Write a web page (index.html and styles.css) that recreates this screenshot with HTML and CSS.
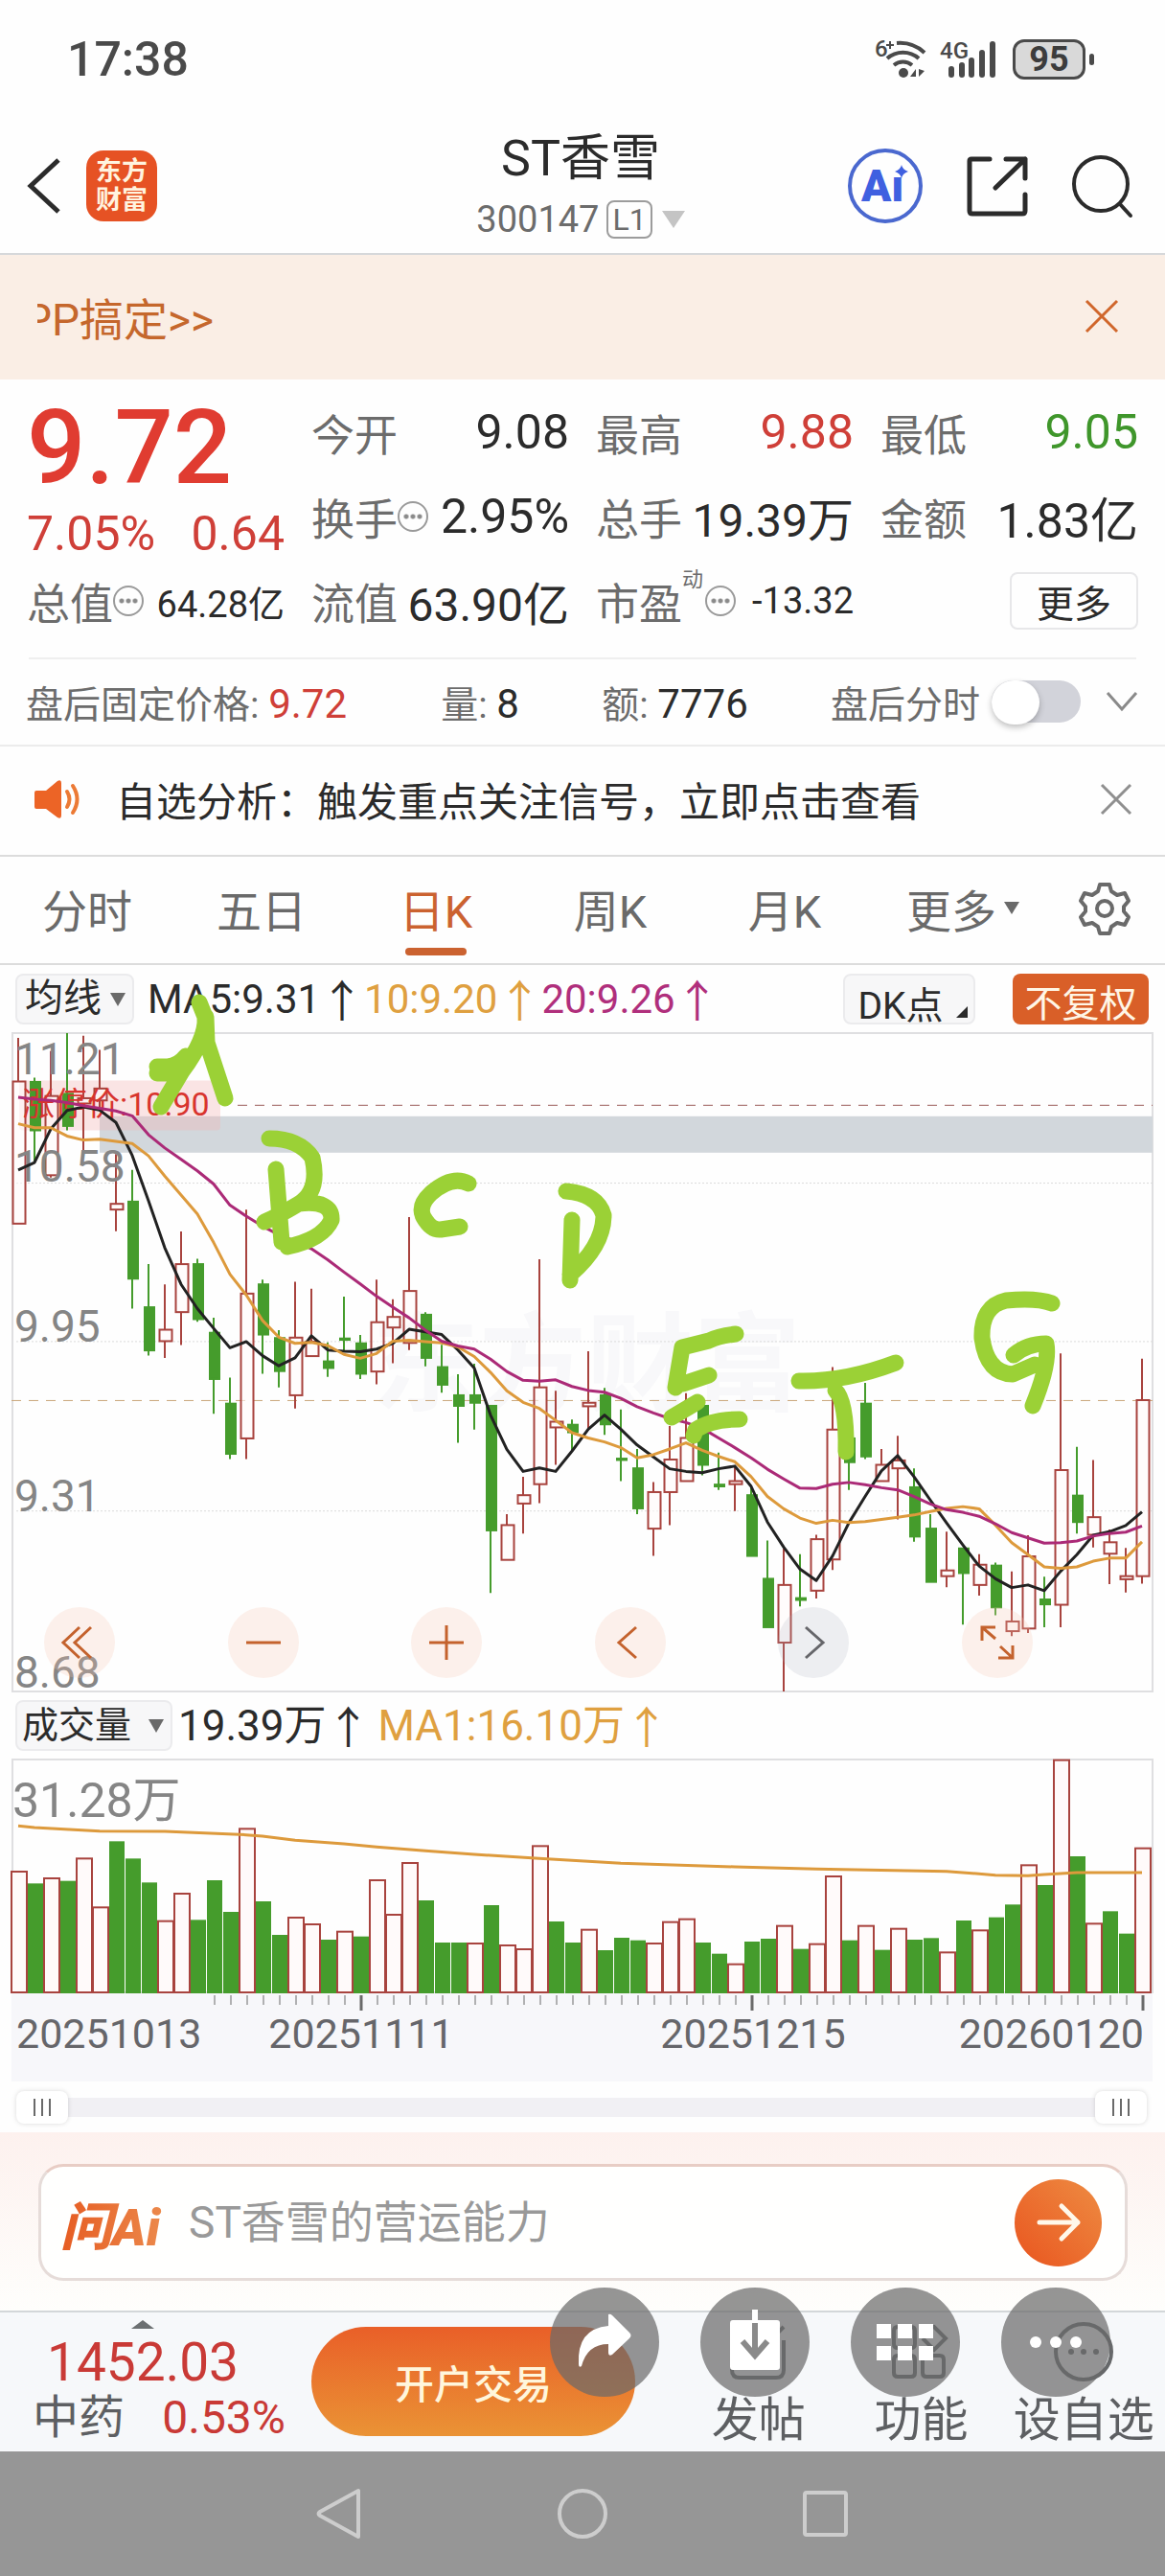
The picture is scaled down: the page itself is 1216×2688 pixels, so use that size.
FILE: index.html
```html
<!DOCTYPE html>
<html lang="zh-CN">
<head>
  <meta charset="UTF-8" />
  <meta name="viewport" content="width=device-width, initial-scale=1.0" />
  <title>ST香雪 300147</title>
  <link rel="stylesheet" href="styles.css">
</head>

<body>

  <div class="status-bar">
    <span class="clock">17:38</span>
    <div class="status-icons">
      <svg class="icon-wifi" width="56" height="42" viewBox="0 0 56 42" fill="none" stroke="#4a4a4a" stroke-width="4">
        <path d="M23 4a38 38 0 0 1 29 10M13 20a25 25 0 0 1 33 0M20 27a15 15 0 0 1 19 0" />
        <circle cx="30" cy="35" r="5" fill="#4a4a4a" stroke="none" />
        <path d="M43 31v8h-6zM46 31v8l6-6z" fill="#4a4a4a" stroke="none" />
        <text class="tiny" x="0" y="18">6</text>
        <path d="M12 6h8M16 2v8" stroke-width="2" />
      </svg>
      <svg class="icon-signal" width="60" height="42" viewBox="0 0 60 42">
        <text class="tiny" x="0" y="20">4G</text>
        <path d="M12 31v6M23 27v10M33 22v15M44 14v23M55 5v32" stroke="#4a4a4a" stroke-width="6" stroke-linecap="round" />
      </svg>
      <span class="battery">95</span>
    </div>
  </div>

  <header class="header">
    <div class="header-left">
      <button class="icon-btn" aria-label="返回">
        <svg width="36" height="60" viewBox="0 0 36 60" fill="none" stroke="#2b2b2b" stroke-width="5"><path d="M33 3 4 30l29 27" /></svg>
      </button>
      <a href="#" class="logo"><span>东方</span><span>财富</span></a>
    </div>
    <div class="header-title">
      <h1>ST香雪</h1>
      <p class="code">300147<span class="level">L1</span><i class="caret"></i></p>
    </div>
    <div class="header-right">
      <button class="icon-btn" aria-label="Ai">
        <svg width="80" height="80" viewBox="0 0 80 80">
          <circle cx="40" cy="40" r="37" fill="none" stroke="#4a68cf" stroke-width="4" />
          <text class="ai-text" x="15" y="56">Aı</text>
          <path d="M57 18q1 5 7 7-6 2-7 7-1-5-7-7 6-2 7-7z" fill="#3f60e0" />
        </svg>
      </button>
      <button class="icon-btn" aria-label="分享">
        <svg width="64" height="64" viewBox="0 0 64 64" fill="none" stroke="#2b2b2b" stroke-width="5" stroke-linecap="round" stroke-linejoin="round">
          <path d="M24 4H5q-2 0-2 2v52q0 3 3 3h52q3 0 3-3V41M41 4h20v20M61 4 30 34" />
        </svg>
      </button>
      <button class="icon-btn" aria-label="搜索">
        <svg width="66" height="66" viewBox="0 0 66 66" fill="none" stroke="#2b2b2b" stroke-width="4" stroke-linecap="round">
          <circle cx="31" cy="31" r="28" /><path d="m51 52 11 12" />
        </svg>
      </button>
    </div>
  </header>

  <div class="banner">
    <div class="banner-text"><span>PP搞定&gt;&gt;</span></div>
    <button class="icon-btn" aria-label="关闭">
      <svg width="36" height="36" viewBox="0 0 36 36" stroke="#d0662b" stroke-width="3"><path d="m2 2 32 32M34 2 2 34" /></svg>
    </button>
  </div>

  <section class="quote">
    <div class="quote-main">
      <p class="price">9.72</p>
      <p class="change"><span>7.05%</span><span>0.64</span></p>
    </div>
    <div class="cell"><label>今开</label><b>9.08</b></div>
    <div class="cell"><label>最高</label><b class="up">9.88</b></div>
    <div class="cell"><label>最低</label><b class="down">9.05</b></div>
    <div class="cell"><label>换手</label><i class="info"></i><b>2.95%</b></div>
    <div class="cell"><label>总手</label><b class="long">19.39万</b></div>
    <div class="cell"><label>金额</label><b>1.83亿</b></div>
    <div class="cell"><label>总值</label><i class="info"></i><b class="small">64.28亿</b></div>
    <div class="cell"><label>流值</label><b class="long">63.90亿</b></div>
    <div class="cell"><label>市盈</label><sup>动</sup><i class="info info-sup"></i><b class="small">-13.32</b></div>
    <div class="cell"><button class="btn-more">更多</button></div>
  </section>

  <section class="after-hours">
    <span class="fixed-price">盘后固定价格: <b class="up">9.72</b></span>
    <span>量: <b>8</b></span>
    <span>额: <b>7776</b></span>
    <div class="switch">
      <label for="afterHours">盘后分时</label>
      <input type="checkbox" id="afterHours">
      <button class="icon-btn" aria-label="展开">
        <svg width="34" height="22" viewBox="0 0 34 22" fill="none" stroke="#8a8a8a" stroke-width="3"><path d="m2 2 15 17L32 2" /></svg>
      </button>
    </div>
  </section>

  <section class="notice">
    <svg width="50" height="42" viewBox="0 0 50 42">
      <path d="M2 12h10L24 2q4-2 4 2v34q0 4-4 2L12 31H2q-2 0-2-2V14q0-2 2-2z" fill="#ec6426" />
      <path d="M34 13q5 8 0 16M40 7q9 14 0 28" fill="none" stroke="#ec7a35" stroke-width="4" stroke-linecap="round" />
    </svg>
    <a href="#">自选分析：触发重点关注信号，立即点击查看</a>
    <button class="icon-btn" aria-label="关闭">
      <svg width="34" height="34" viewBox="0 0 34 34" stroke="#8f8f8f" stroke-width="3"><path d="m2 2 30 30M32 2 2 32" /></svg>
    </button>
  </section>

  <nav class="tabs">
    <button>分时</button>
    <button>五日</button>
    <button class="active">日K</button>
    <button>周K</button>
    <button>月K</button>
    <button>更多<i class="caret caret-small"></i></button>
    <button aria-label="设置">
      <svg width="56" height="56" viewBox="0 0 56 56" fill="none" stroke="#6a6a6a" stroke-width="4" stroke-linejoin="round">
        <path d="M23 3h10l2 7 6 4 8-2 4 8-5 6v5l5 6-4 8-8-2-6 4-2 7H23l-2-7-6-4-8 2-4-8 5-6v-5l-5-6 4-8 8 2 6-4z" />
        <circle cx="28" cy="28" r="8" />
      </svg>
    </button>
  </nav>

  <section class="toolbar">
    <div class="select-box">
      <select aria-label="指标"><option>均线</option></select>
    </div>
    <p class="ma"><span>MA5:9.31<i class="arrow">↑</i></span><span class="ma10">10:9.20<i class="arrow">↑</i></span><span class="ma20">20:9.26<i class="arrow">↑</i></span></p>
    <button class="btn-dk">DK点</button>
    <button class="btn-adjust">不复权</button>
  </section>

  <section class="chart">
    <svg id="kline" viewBox="0 0 1191 687"></svg>
    <div class="chart-controls">
      <button aria-label="最前"><svg width="36" height="36" viewBox="0 0 36 36"><path d="M18 2 1 18l17 16M30 2 13 18l17 16" /></svg></button>
      <button aria-label="缩小"><svg width="36" height="36" viewBox="0 0 36 36"><path d="M0 18h36" /></svg></button>
      <button aria-label="放大"><svg width="36" height="36" viewBox="0 0 36 36"><path d="M0 18h36M18 0v36" /></svg></button>
      <button aria-label="向左"><svg width="36" height="36" viewBox="0 0 36 36"><path d="M24 2 6 18l18 16" /></svg></button>
      <button class="disabled" aria-label="向右"><svg width="36" height="36" viewBox="0 0 36 36"><path d="m10 2 18 16-18 16" /></svg></button>
      <button aria-label="全屏"><svg width="36" height="36" viewBox="0 0 36 36"><path d="M16 2H2v14M2 2l14 12M34 21v13H19M34 34 21 22" /></svg></button>
    </div>
  </section>

  <section class="toolbar toolbar-volume">
    <div class="select-box select-wide">
      <select aria-label="副图"><option>成交量</option></select>
    </div>
    <p class="ma ma-volume"><span>19.39万<i class="arrow">↑</i></span><span class="ma10">MA1:16.10万<i class="arrow">↑</i></span></p>
  </section>

  <section class="chart">
    <svg id="volume" viewBox="0 0 1191 336"></svg>
  </section>

  <div class="range">
    <input type="range" min="0" max="100" value="0" aria-label="开始">
    <input type="range" min="0" max="100" value="100" aria-label="结束">
  </div>

  <section class="ask">
    <form class="ask-box">
      <label for="question">问Ai</label>
      <input type="text" id="question" placeholder="ST香雪的营运能力">
      <button type="button" aria-label="提问">
        <svg width="46" height="46" viewBox="0 0 46 46" fill="none" stroke="#fff8ea" stroke-width="5" stroke-linecap="round" stroke-linejoin="round"><path d="M3 23h40M26 6l17 17-17 17" /></svg>
      </button>
    </form>
  </section>

  <footer class="bottom-bar">
    <a href="#" class="sector">
      <span class="sector-top"><i class="caret caret-up"></i><span class="index">1452.03</span></span>
      <span class="sector-row"><em>中药</em><b>0.53%</b></span>
    </a>
    <button class="btn-trade">开户交易</button>
    <div class="actions">
      <a href="#">
        <svg width="64" height="64" viewBox="0 0 64 64"><path d="M34 5H12q-8 0-8 8v38q0 8 8 8h38q8 0 8-8V20M30 34 58 6" /></svg>
        发帖
      </a>
      <a href="#">
        <svg width="64" height="64" viewBox="0 0 64 64"><path d="M8 6h14q4 0 4 4v14q0 4-4 4H8q-4 0-4-4V10q0-4 4-4zM8 36h14q4 0 4 4v14q0 4-4 4H8q-4 0-4-4V40q0-4 4-4zM38 36h14q4 0 4 4v14q0 4-4 4H38q-4 0-4-4V40q0-4 4-4zM34 6h12l12 12-12 12-12-12" /></svg>
        功能
      </a>
      <a href="#">
        <svg width="64" height="64" viewBox="0 0 64 64"><circle cx="32" cy="32" r="29" /><circle class="dot" cx="19" cy="32" r="3" /><circle class="dot" cx="32" cy="32" r="3" /><circle class="dot" cx="45" cy="32" r="3" /></svg>
        设自选
      </a>
    </div>

    <!-- floating viewer buttons, above the bar -->
    <div class="floating">
      <button aria-label="转发"><svg width="60" height="60" viewBox="0 0 60 60"><path d="M34 1q2-1 4 1l18 18q3 3 0 6L38 43q-4 2-4-2v-9Q12 32 6 55q-3 2-3-2Q1 16 34 13z" /></svg></button>
      <button aria-label="保存"><svg width="60" height="64" viewBox="0 0 60 64"><path d="M4 12q0-3 3-3h46q3 0 3 3v46q0 3-3 3H7q-3 0-3-3z" /><path d="M30 -2v14" stroke="#fff" stroke-width="6" /><path d="M30 12v32M17 31l13 15 13-15" fill="none" stroke="#8a8a8a" stroke-width="6" /></svg></button>
      <button aria-label="全部"><svg width="60" height="40" viewBox="0 0 60 40"><path d="M0 1h15v15H0zM22 1h15v15H22zM44 1h15v15H44zM0 24h15v15H0zM22 24h15v15H22zM44 24h15v15H44z" /></svg></button>
      <button aria-label="更多操作"><svg width="60" height="16" viewBox="0 0 60 16"><circle cx="9" cy="8" r="6" /><circle cx="30" cy="8" r="6" /><circle cx="51" cy="8" r="6" /></svg></button>
    </div>
  </footer>

  <nav class="system-nav">
    <button class="icon-btn" aria-label="后退"><svg width="50" height="54" viewBox="0 0 50 54"><path d="M45 3v48L5 29q-3-2 0-4z" /></svg></button>
    <button class="icon-btn" aria-label="主页"><svg width="54" height="54" viewBox="0 0 54 54"><circle cx="27" cy="27" r="24" /></svg></button>
    <button class="icon-btn" aria-label="任务"><svg width="50" height="54" viewBox="0 0 50 54"><rect x="3" y="5" width="43" height="44" rx="2" /></svg></button>
  </nav>

  <script src="chart.js"></script>
</body>
</html>
```
FILE: styles.css
```css
* {
  margin: 0;
  padding: 0;
  box-sizing: border-box;
}

body {
  font-family: Roboto, "Noto Sans CJK SC", sans-serif;
  background-color: #fefefe;
  color: #2b2b2b;
}

button,
input,
select {
  font-family: inherit;
  color: inherit;
  border: none;
  background: none;
}

button {
  cursor: pointer;
}

a {
  color: inherit;
  text-decoration: none;
}

i,
em {
  font-style: normal;
}

svg {
  display: block;
  overflow: visible;
}

.icon-btn {
  display: block;
  line-height: 0;
}

.up {
  color: #cf3f38;
}

.down {
  color: #3f962b;
}

.caret {
  display: inline-block;
  border: 12px solid transparent;
  border-top: 18px solid #c4c4c4;
  border-bottom: none;
}

/* status bar */
.status-bar {
  display: flex;
  justify-content: space-between;
  align-items: center;
  height: 124px;
  padding: 0 83px 0 70px;
}

.clock {
  font-size: 50px;
  font-weight: 500;
  color: #4a4a4a;
}

.status-icons {
  display: flex;
  align-items: center;
  gap: 12px;
}

.tiny {
  font-size: 24px;
  font-weight: 500;
  fill: #4a4a4a;
  stroke: none;
}

.battery {
  position: relative;
  width: 76px;
  height: 42px;
  margin-left: 4px;
  border: 3px solid #4a4a4a;
  border-radius: 12px;
  background-color: #d9d9d9;
  font-size: 36px;
  font-weight: 700;
  line-height: 36px;
  text-align: center;
  color: #3c3c3c;
}

.battery::after {
  content: "";
  position: absolute;
  top: 12px;
  right: -12px;
  width: 5px;
  height: 12px;
  border-radius: 3px;
  background-color: #4a4a4a;
}

/* header */
.header {
  display: grid;
  grid-template-columns: 1fr auto 1fr;
  align-items: center;
  height: 142px;
  padding: 0 32px 0 28px;
  border-bottom: 2px solid #d6d8da;
}

.header-left,
.header-right {
  display: flex;
  align-items: center;
  gap: 26px;
}

.header-right {
  justify-content: flex-end;
  gap: 45px;
}

.logo {
  width: 74px;
  height: 74px;
  padding: 7px 0;
  border-radius: 18px;
  background-color: #e65224;
  color: #fff3df;
  font-size: 27px;
  font-weight: 700;
  line-height: 30px;
  text-align: center;
}

.logo span {
  display: block;
}

.header-title {
  padding-top: 5px;
  text-align: center;
}

h1 {
  font-size: 52px;
  font-weight: 400;
  line-height: 64px;
}

.code {
  display: flex;
  align-items: center;
  justify-content: center;
  gap: 8px;
  font-size: 38px;
  line-height: 62px;
  color: #6c6c6c;
}

.level {
  padding: 0 4px;
  border: 2px solid #9c9c9c;
  border-radius: 8px;
  font-size: 32px;
  line-height: 36px;
}

.code .caret {
  margin-left: 2px;
}

.ai-text {
  font-size: 46px;
  font-weight: 900;
  fill: #3f60e0;
}

/* banner */
.banner {
  display: flex;
  align-items: center;
  justify-content: space-between;
  height: 130px;
  padding: 0 48px 3px 39px;
  background-color: #faeee5;
}

.banner-text {
  overflow: hidden;
  font-size: 46px;
  color: #c5672c;
}

.banner-text span {
  display: block;
  margin-left: -14px;
}

/* quote */
.quote {
  display: grid;
  grid-template-columns: repeat(4, 1fr);
  grid-auto-rows: 88px;
  column-gap: 28px;
  margin: 0 28px;
  padding: 11px 0 15px;
}

.quote-main {
  grid-row: span 2;
  padding-top: 6px;
}

.price {
  font-size: 108px;
  font-weight: 500;
  line-height: 108px;
  color: #e03c31;
}

.change {
  display: flex;
  justify-content: space-between;
  font-size: 50px;
  line-height: 72px;
  color: #cf3f38;
}

.cell {
  display: flex;
  align-items: center;
}

.cell label {
  font-size: 45px;
  color: #6c6c6c;
}

.cell b {
  margin-left: auto;
  font-size: 50px;
  font-weight: 400;
  white-space: nowrap;
}

.cell .long {
  font-size: 48px;
}

.cell .small {
  font-size: 38px;
}

.cell sup {
  align-self: flex-start;
  font-size: 22px;
  line-height: 44px;
  color: #6c6c6c;
}

.info {
  width: 32px;
  height: 32px;
  border: 2px solid #9a9a9a;
  border-radius: 50%;
  background: radial-gradient(circle, #8a8a8a 2px, transparent 3px) center / 7px 28px repeat-x content-box;
  padding: 0 3px;
}

.info-sup {
  margin-left: 2px;
}

.btn-more {
  width: 134px;
  height: 60px;
  margin-left: auto;
  padding-bottom: 4px;
  border: 2px solid #e7e7e9;
  border-radius: 8px;
  font-size: 39px;
}

/* after hours */
.after-hours {
  display: flex;
  align-items: center;
  justify-content: space-between;
  height: 93px;
  padding: 0 28px 0 27px;
  border-bottom: 2px solid #ececec;
  font-size: 39px;
  color: #6c6c6c;
  background: linear-gradient(#efefef, #efefef) center top / calc(100% - 60px) 2px no-repeat;
}

.after-hours b {
  font-weight: 400;
  font-size: 42px;
  color: #2b2b2b;
}

.after-hours .up {
  color: #cf3f38;
}

.fixed-price {
  margin-right: 12px;
}

.switch {
  display: flex;
  align-items: center;
}

.switch input {
  appearance: none;
  width: 93px;
  height: 44px;
  margin: 0 26px 0 12px;
  border-radius: 22px;
  background-color: #d2d3da;
}

.switch input::before {
  content: "";
  display: block;
  width: 50px;
  height: 46px;
  border-radius: 24px;
  background-color: #fff;
  box-shadow: 0 3px 6px rgba(0, 0, 0, 0.25);
}

/* notice */
.notice {
  display: flex;
  align-items: center;
  height: 115px;
  padding: 0 34px 4px 36px;
  border-bottom: 2px solid #dcdcdc;
}

.notice a {
  flex: 1;
  padding-left: 35px;
  font-size: 42px;
}

/* tabs */
.tabs {
  display: grid;
  grid-template-columns: repeat(5, 182fr) 190fr 106fr;
  height: 113px;
  padding-right: 10px;
  border-bottom: 2px solid #dcdcdc;
}

.tabs button {
  position: relative;
  display: flex;
  align-items: center;
  justify-content: center;
  padding-bottom: 4px;
  font-size: 47px;
  color: #6a6a6a;
}

.tabs .active {
  color: #cb6230;
}

.tabs .active::after {
  content: "";
  position: absolute;
  bottom: 8px;
  width: 64px;
  height: 8px;
  border-radius: 4px;
  background-color: #cb6230;
}

.caret-small {
  margin-left: 8px;
  border-width: 8px;
  border-top: 13px solid #6a6a6a;
}

/* toolbars */
.toolbar {
  display: flex;
  align-items: center;
  height: 71px;
  padding: 0 17px 0 16px;
}

.select-box {
  position: relative;
}

.select-box select {
  appearance: none;
  display: block;
  width: 124px;
  height: 53px;
  padding: 0 8px 2px;
  border: 2px solid #ebebed;
  border-radius: 8px;
  background-color: #f7f7f8;
  font-size: 40px;
}

.select-box::after {
  content: "";
  position: absolute;
  top: 20px;
  right: 9px;
  border: 8px solid transparent;
  border-top: 14px solid #6a6a6a;
  border-bottom: none;
}

.select-wide select {
  width: 164px;
  padding: 0 5px 2px;
  font-size: 38px;
}

.ma {
  display: flex;
  flex: 1;
  gap: 4px;
  margin-left: 14px;
  font-size: 42px;
  line-height: 60px;
}

.ma span {
  display: flex;
}

.ma10 {
  color: #dfa040;
}

.ma20 {
  color: #b02f7c;
}

.arrow {
  width: 42px;
  font-family: "Noto Sans", "Noto Sans CJK SC", sans-serif;
  font-size: 46px;
  text-align: center;
}

.ma-volume {
  gap: 12px;
  margin-left: 6px;
  font-size: 44px;
}

.btn-dk {
  position: relative;
  width: 138px;
  height: 53px;
  margin-right: 39px;
  padding: 0 18px 4px 0;
  border: 2px solid #ebebed;
  border-radius: 8px;
  background-color: #f7f7f8;
  font-size: 39px;
}

.btn-dk::after {
  content: "";
  position: absolute;
  right: 6px;
  bottom: 5px;
  border-left: 12px solid transparent;
  border-bottom: 12px solid #2b2b2b;
}

.btn-adjust {
  width: 142px;
  height: 53px;
  padding-bottom: 4px;
  border-radius: 8px;
  background-color: #d95f28;
  color: #fff6e6;
  font-size: 39px;
}

/* charts */
.chart {
  position: relative;
  margin: 0 13px 0 12px;
}

.chart svg {
  width: 100%;
}

.frame {
  fill: none;
  stroke: #dfdfe1;
  stroke-width: 2;
}

.grid {
  stroke: #dadada;
  stroke-dasharray: 2 2;
}

.limit-band {
  fill: #d2d7dc;
}

.limit-line {
  stroke: #9a5a58;
  stroke-width: 1;
  stroke-dasharray: 10 8;
}

.last-line {
  stroke: #c9a57a;
  stroke-width: 1;
  stroke-dasharray: 10 8;
}

.limit-bg {
  fill: rgba(244, 180, 180, 0.35);
}

.limit-text {
  font-size: 34px;
  fill: #d8342e;
}

.watermark {
  font-size: 112px;
  font-weight: 700;
  fill: #f8f8fa;
}

.axis {
  font-size: 46px;
  fill: #858585;
}

.axis-volume {
  font-size: 50px;
}

.date {
  font-size: 43px;
  fill: #66666a;
}

.rise {
  fill: #fffafa;
  stroke: #a8433e;
  stroke-width: 2;
}

.fall {
  fill: #459c2c;
  stroke: #459c2c;
  stroke-width: 2;
}

.line {
  fill: none;
  stroke-width: 3;
  stroke-linejoin: round;
}

.line-ma5 {
  stroke: #222;
}

.line-ma10 {
  stroke: #dd9a3c;
}

.line-ma20 {
  stroke: #ab2a77;
}

.axis-bg {
  fill: #f7f7fa;
}

.tick {
  stroke: #6a6a6a;
  stroke-width: 1;
}

.tick-major {
  stroke-width: 3;
}

.pen {
  fill: none;
  stroke: #9bd136;
  stroke-width: 17;
  stroke-linecap: round;
  stroke-linejoin: round;
}

.chart-controls {
  position: absolute;
  left: 34px;
  right: 125px;
  bottom: 14px;
  display: flex;
  justify-content: space-between;
}

.chart-controls button {
  display: flex;
  align-items: center;
  justify-content: center;
  width: 74px;
  height: 74px;
  border-radius: 50%;
  background-color: rgba(247, 200, 180, 0.25);
}

.chart-controls .disabled {
  background-color: rgba(170, 175, 190, 0.2);
}

.chart-controls svg {
  width: 36px;
  fill: none;
  stroke: #c4622d;
  stroke-width: 3;
}

.chart-controls .disabled svg {
  stroke: #66666a;
}

/* zoom range under the volume chart */
.range {
  display: flex;
  height: 53px;
  padding: 0 19px 0 17px;
  align-items: center;
}

.range input {
  appearance: none;
  flex: 1;
  min-width: 0;
  height: 20px;
  background-color: #f1f0f4;
}

.range input::-webkit-slider-thumb {
  appearance: none;
  width: 54px;
  height: 34px;
  border-radius: 8px;
  box-shadow: 0 0 5px rgba(0, 0, 0, 0.15);
  background: repeating-linear-gradient(to right, #6a6a6a 0 2px, transparent 2px 8px) center / 18px 18px no-repeat #fff;
}

/* ask */
.ask {
  padding: 33px 39px 31px 40px;
  background: linear-gradient(#fdf1ee, #fefefc);
}

.ask-box {
  display: flex;
  align-items: center;
  height: 122px;
  padding: 0 24px 0 20px;
  border: 3px solid #e6dcd9;
  border-top-color: #e8cdc5;
  border-radius: 26px;
  background-color: #fffffe;
}

.ask-box label {
  padding-right: 6px;
  font-size: 54px;
  font-weight: 900;
  font-style: italic;
  background: linear-gradient(to right, #e65c22, #ec8a4c);
  background-clip: text;
  color: transparent;
}

.ask-box input {
  flex: 1;
  min-width: 0;
  margin-left: 24px;
  font-size: 46px;
  outline: none;
}

.ask-box input::placeholder {
  color: #999;
}

.ask-box button {
  display: flex;
  align-items: center;
  justify-content: center;
  width: 91px;
  height: 91px;
  border-radius: 50%;
  background: linear-gradient(to top right, #e9551f, #ee8c42);
}

/* bottom bar */
.bottom-bar {
  position: relative;
  display: flex;
  height: 147px;
  border-top: 2px solid #d3d7d9;
  background-color: #f6f8fa;
}

.sector {
  width: 325px;
  padding: 8px 27px 0 34px;
  color: #c93a36;
}

.sector-top {
  display: flex;
  flex-direction: column;
  align-items: center;
  padding-right: 34px;
}

.caret-up {
  border: 12px solid transparent;
  border-top: none;
  border-bottom: 9px solid #6c7072;
}

.index {
  font-size: 55px;
  font-weight: 400;
  line-height: 70px;
}

.sector-row {
  display: flex;
  justify-content: space-between;
  font-size: 48px;
  line-height: 46px;
}

.sector-row b {
  font-weight: 400;
}

.sector-row em {
  color: #5d5f62;
}

.btn-trade {
  width: 338px;
  height: 114px;
  margin-top: 15px;
  border-radius: 57px;
  background: linear-gradient(#e95f28, #ea9335);
  color: #fff6dc;
  font-size: 41px;
  font-weight: 500;
}

.actions {
  display: grid;
  grid-template-columns: repeat(3, 1fr);
  flex: 1;
  margin-left: 44px;
  padding-top: 9px;
}

.actions a {
  display: flex;
  flex-direction: column;
  align-items: center;
  font-size: 49px;
  line-height: 80px;
  color: #5d5f62;
  white-space: nowrap;
}

.actions svg {
  fill: none;
  stroke: #66686a;
  stroke-width: 4;
}

.actions .dot {
  fill: #66686a;
  stroke: none;
}

.floating {
  position: absolute;
  top: -26px;
  right: 57px;
  display: flex;
  gap: 43px;
}

.floating button {
  display: flex;
  align-items: center;
  justify-content: center;
  width: 114px;
  height: 114px;
  border-radius: 50%;
  background-color: rgba(105, 105, 105, 0.71);
}

.floating svg {
  fill: #fff;
}

.system-nav {
  display: flex;
  align-items: center;
  justify-content: center;
  gap: 202px;
  height: 130px;
  background-color: #969696;
}

.system-nav svg {
  fill: none;
  stroke: #cdcdcd;
  stroke-width: 4;
  stroke-linejoin: round;
}
```
FILE: chart.js
```js
const NS = 'http://www.w3.org/2000/svg';
const STEP = 17;
const LEFT = 7;

function draw(parent, tag, attrs, text) {
  const node = document.createElementNS(NS, tag);
  Object.keys(attrs).forEach((key) => node.setAttribute(key, attrs[key]));
  if (text) node.textContent = text;
  parent.appendChild(node);
  return node;
}

const px = (i) => LEFT + i * STEP;

// level scale of the price pane: 37 is the top edge, 1533 the bottom edge
const py = (v) => (v - 37) * 687 / 1496;
// level scale of the volume pane
const vy = (v) => (v - 228) / 3;

// direction, high, body top, body bottom, low
const candles = [
  ['r', 48, 147, 470, 470], ['g', 138, 148, 258, 330], ['r', 78, 180, 360, 365], ['g', 37, 175, 248, 258],
  ['r', 43, 185, 197, 305], ['r', 75, 163, 190, 215], ['r', 312, 425, 438, 487], ['g', 348, 420, 595, 663],
  ['g', 562, 660, 758, 770], ['r', 608, 711, 737, 775], ['r', 488, 562, 671, 746], ['g', 550, 562, 687, 693],
  ['g', 684, 718, 823, 902], ['g', 820, 879, 993, 1005], ['r', 438, 629, 958, 1005], ['g', 597, 608, 722, 811],
  ['g', 712, 730, 805, 842], ['r', 602, 729, 860, 890], ['r', 618, 738, 771, 771], ['g', 740, 783, 798, 818],
  ['g', 636, 731, 734, 760], ['g', 723, 742, 811, 823], ['r', 597, 694, 806, 835], ['r', 642, 682, 706, 787],
  ['r', 455, 623, 741, 757], ['g', 671, 677, 775, 794], ['g', 745, 796, 836, 854], ['g', 812, 860, 884, 968],
  ['g', 788, 860, 877, 938], ['g', 884, 884, 1167, 1309], ['r', 1130, 1155, 1234, 1234], ['r', 1045, 1087, 1106, 1174],
  ['r', 551, 842, 1062, 1105], ['r', 850, 920, 933, 1018], ['g', 915, 927, 944, 987], ['r', 760, 877, 885, 935],
  ['g', 843, 860, 926, 950], ['g', 892, 1004, 1007, 1055], ['g', 982, 1026, 1117, 1130], ['r', 1057, 1080, 1163, 1225],
  ['r', 930, 1006, 1080, 1155], ['r', 855, 957, 1055, 1055], ['g', 884, 884, 1018, 1042], ['g', 990, 1063, 1067, 1075],
  ['r', 1020, 1055, 1062, 1123], ['g', 1065, 1087, 1225, 1225], ['g', 1190, 1277, 1387, 1387], ['r', 1208, 1291, 1422, 1533],
  ['g', 1221, 1321, 1325, 1340], ['r', 1177, 1187, 1304, 1322], ['r', 796, 938, 1233, 1257], ['g', 958, 958, 1012, 1075],
  ['g', 832, 879, 999, 1005], ['r', 982, 1018, 1055, 1055], ['r', 952, 1008, 1026, 1142], ['g', 1026, 1069, 1181, 1193],
  ['g', 1130, 1163, 1284, 1284], ['r', 1170, 1258, 1271, 1296], ['g', 1208, 1208, 1264, 1381], ['r', 1221, 1245, 1291, 1315],
  ['g', 1240, 1247, 1342, 1360], ['r', 1260, 1374, 1396, 1407], ['r', 1178, 1226, 1390, 1400], ['g', 1272, 1324, 1335, 1387],
  ['r', 765, 1030, 1336, 1387], ['g', 977, 1088, 1148, 1174], ['r', 1007, 1137, 1177, 1206], ['r', 1165, 1194, 1220, 1289],
  ['r', 1207, 1271, 1278, 1308], ['r', 777, 871, 1271, 1288]
];

const ma5 = [348, 331, 255, 213, 205, 212, 240, 315, 418, 525, 608, 663, 708, 752, 738, 770, 793, 775, 725, 757, 760, 761, 755, 742, 710, 716, 722, 757, 798, 905, 983, 1033, 1025, 1033, 987, 937, 905, 937, 973, 1000, 1027, 1033, 1036, 1027, 1021, 1067, 1148, 1205, 1255, 1281, 1225, 1150, 1090, 1032, 997, 1045, 1098, 1150, 1200, 1248, 1277, 1297, 1291, 1304, 1260, 1222, 1178, 1170, 1156, 1125];
const ma10 = [243, 252, 252, 271, 280, 278, 283, 288, 316, 362, 405, 448, 513, 585, 632, 690, 728, 742, 740, 747, 767, 776, 765, 737, 735, 738, 741, 750, 772, 808, 850, 876, 890, 917, 945, 957, 966, 979, 1002, 995, 982, 968, 985, 999, 1011, 1045, 1090, 1118, 1139, 1151, 1144, 1149, 1147, 1142, 1137, 1132, 1124, 1117, 1113, 1118, 1155, 1195, 1222, 1250, 1253, 1250, 1237, 1230, 1230, 1193];
const ma20 = [183, 187, 190, 195, 202, 208, 214, 225, 268, 298, 324, 350, 380, 428, 453, 476, 495, 510, 527, 552, 580, 607, 635, 660, 684, 712, 737, 748, 755, 778, 806, 826, 828, 825, 840, 849, 853, 867, 886, 900, 913, 922, 935, 957, 979, 1002, 1028, 1050, 1071, 1072, 1062, 1058, 1063, 1070, 1075, 1090, 1107, 1120, 1126, 1135, 1152, 1172, 1184, 1196, 1195, 1191, 1180, 1174, 1171, 1157];

const volumes = 'r579 g619 r600 g611 r538 r691 g487 g541 g616 r734 r648 g733 g609 g708 r445 g675 g780 r723 r744 g795 r767 g785 r606 r714 r552 g672 g804 g804 r804 g687 r810 r822 r499 g738 g804 r761 g828 g789 g797 r804 r737 r728 g804 g839 r869 g801 g792 r749 g824 r806 r594 g797 r749 g827 r758 g795 g790 r832 g735 r763 g725 g685 r559 g624 r230 g534 r742 g706 g776 r506'.split(' ');
const volumeMa = [[0, 436], [1, 441], [5, 452], [9, 453], [14, 464], [15, 468], [17, 481], [20, 492], [22, 502], [25, 514], [28, 525], [32, 538], [37, 553], [44, 564], [49, 571], [57, 578], [60, 590], [62, 592], [63, 588], [65, 582], [69, 582]];

// hand-written letters on top of the price pane
const letters = [
  'M196 -32L202 -17Q204 5 178 40L156 77M203 -17L204 10L223 68M152 35H163Q174 34 182 24M152 42H168',
  'M269 110Q300 110 314 130Q322 165 300 178Q280 190 264 197M276 142L282 218M300 178Q335 174 334 195Q325 215 288 223',
  'M477 157Q460 148 438 167Q424 180 430 192Q438 206 448 205L468 202',
  'M579 165Q612 168 618 190Q618 222 583 252M585 195L583 258',
  'M756 314Q738 316 728 321L700 328L693 370M728 357L701 366M716 385L689 401M760 403Q730 403 714 414L712 420',
  'M822 363Q870 364 923 344M860 373Q872 384 871 437',
  'M1086 282Q1070 276 1038 279Q1012 285 1013 318Q1018 355 1045 356L1068 346M1046 336Q1060 324 1080 324Q1084 345 1066 389'
];

function drawKline() {
  const svg = document.getElementById('kline');

  draw(svg, 'text', { class: 'watermark', x: 376, y: 386 }, '东方财富');
  draw(svg, 'rect', { class: 'frame', x: 1, y: 0, width: 1190, height: 687 });
  [378, 738, 1123].forEach((v) => {
    draw(svg, 'line', { class: 'grid', x1: 5, x2: 1191, y1: py(v), y2: py(v) });
  });
  draw(svg, 'rect', { class: 'limit-band', x: 92, y: py(226), width: 1099, height: 38 });
  draw(svg, 'line', { class: 'limit-line', x1: 236, x2: 1191, y1: py(201), y2: py(201) });
  draw(svg, 'line', { class: 'last-line', x1: 0, x2: 1191, y1: py(872), y2: py(872) });
  draw(svg, 'rect', { class: 'limit-bg', x: 8, y: py(145), width: 210, height: 52, rx: 4 });

  candles.forEach(([dir, high, top, bottom, low], i) => {
    const cls = dir === 'r' ? 'rise' : 'fall';
    const w = dir === 'r' ? 13 : 10;
    draw(svg, 'line', { class: cls, x1: px(i), x2: px(i), y1: py(high), y2: py(top) });
    draw(svg, 'line', { class: cls, x1: px(i), x2: px(i), y1: py(bottom), y2: py(low) });
    const body = draw(svg, 'rect', { class: cls, x: px(i) + 1 - w / 2, y: py(top), width: w, height: py(bottom) - py(top) });
    if (dir === 'r') body.setAttribute('fill-opacity', 0.6);
  });

  [['11.21', 130], ['10.58', 375], ['9.95', 738], ['9.31', 1123], ['8.68', 1525]].forEach(([label, v]) => {
    draw(svg, 'text', { class: 'axis', x: 3, y: py(v) }, label);
  });
  draw(svg, 'text', { class: 'limit-text', x: 11, y: py(225) }, '涨停价:10.90');

  [['line-ma5', ma5], ['line-ma10', ma10], ['line-ma20', ma20]].forEach(([cls, data]) => {
    draw(svg, 'polyline', { class: 'line ' + cls, points: data.map((v, i) => px(i) + ',' + py(v)).join(' ') });
  });

  letters.forEach((d) => draw(svg, 'path', { class: 'pen', d: d }));
}

function drawVolume() {
  const svg = document.getElementById('volume');
  const base = 243;

  draw(svg, 'rect', { class: 'axis-bg', x: 0, y: base, width: 1191, height: 93 });
  draw(svg, 'rect', { class: 'frame', x: 1, y: 0, width: 1190, height: base });
  draw(svg, 'text', { class: 'axis axis-volume', x: 1, y: 60 }, '31.28万');

  volumes.forEach((item, i) => {
    const y = vy(Number(item.slice(1)));
    const rise = item[0] === 'r';
    const w = rise ? 16 : 14;
    draw(svg, 'rect', { class: rise ? 'rise' : 'fall', x: px(i) + 1 - w / 2, y: y, width: w, height: base - y });
  });

  draw(svg, 'polyline', { class: 'line line-ma10', points: volumeMa.map(([i, v]) => px(i) + ',' + vy(v)).join(' ') });

  for (let i = 12; i < 70; i++) {
    const major = i === 21 || i === 45 || i === 69;
    draw(svg, 'line', { class: major ? 'tick tick-major' : 'tick', x1: px(i) + 1, x2: px(i) + 1, y1: base + 3, y2: base + (major ? 19 : 13) });
  }

  draw(svg, 'text', { class: 'date', x: 5, y: 301 }, '20251013');
  draw(svg, 'text', { class: 'date', x: 365, y: 301, 'text-anchor': 'middle' }, '20251111');
  draw(svg, 'text', { class: 'date', x: 774, y: 301, 'text-anchor': 'middle' }, '20251215');
  draw(svg, 'text', { class: 'date', x: 1182, y: 301, 'text-anchor': 'end' }, '20260120');
}

drawKline();
drawVolume();
```
